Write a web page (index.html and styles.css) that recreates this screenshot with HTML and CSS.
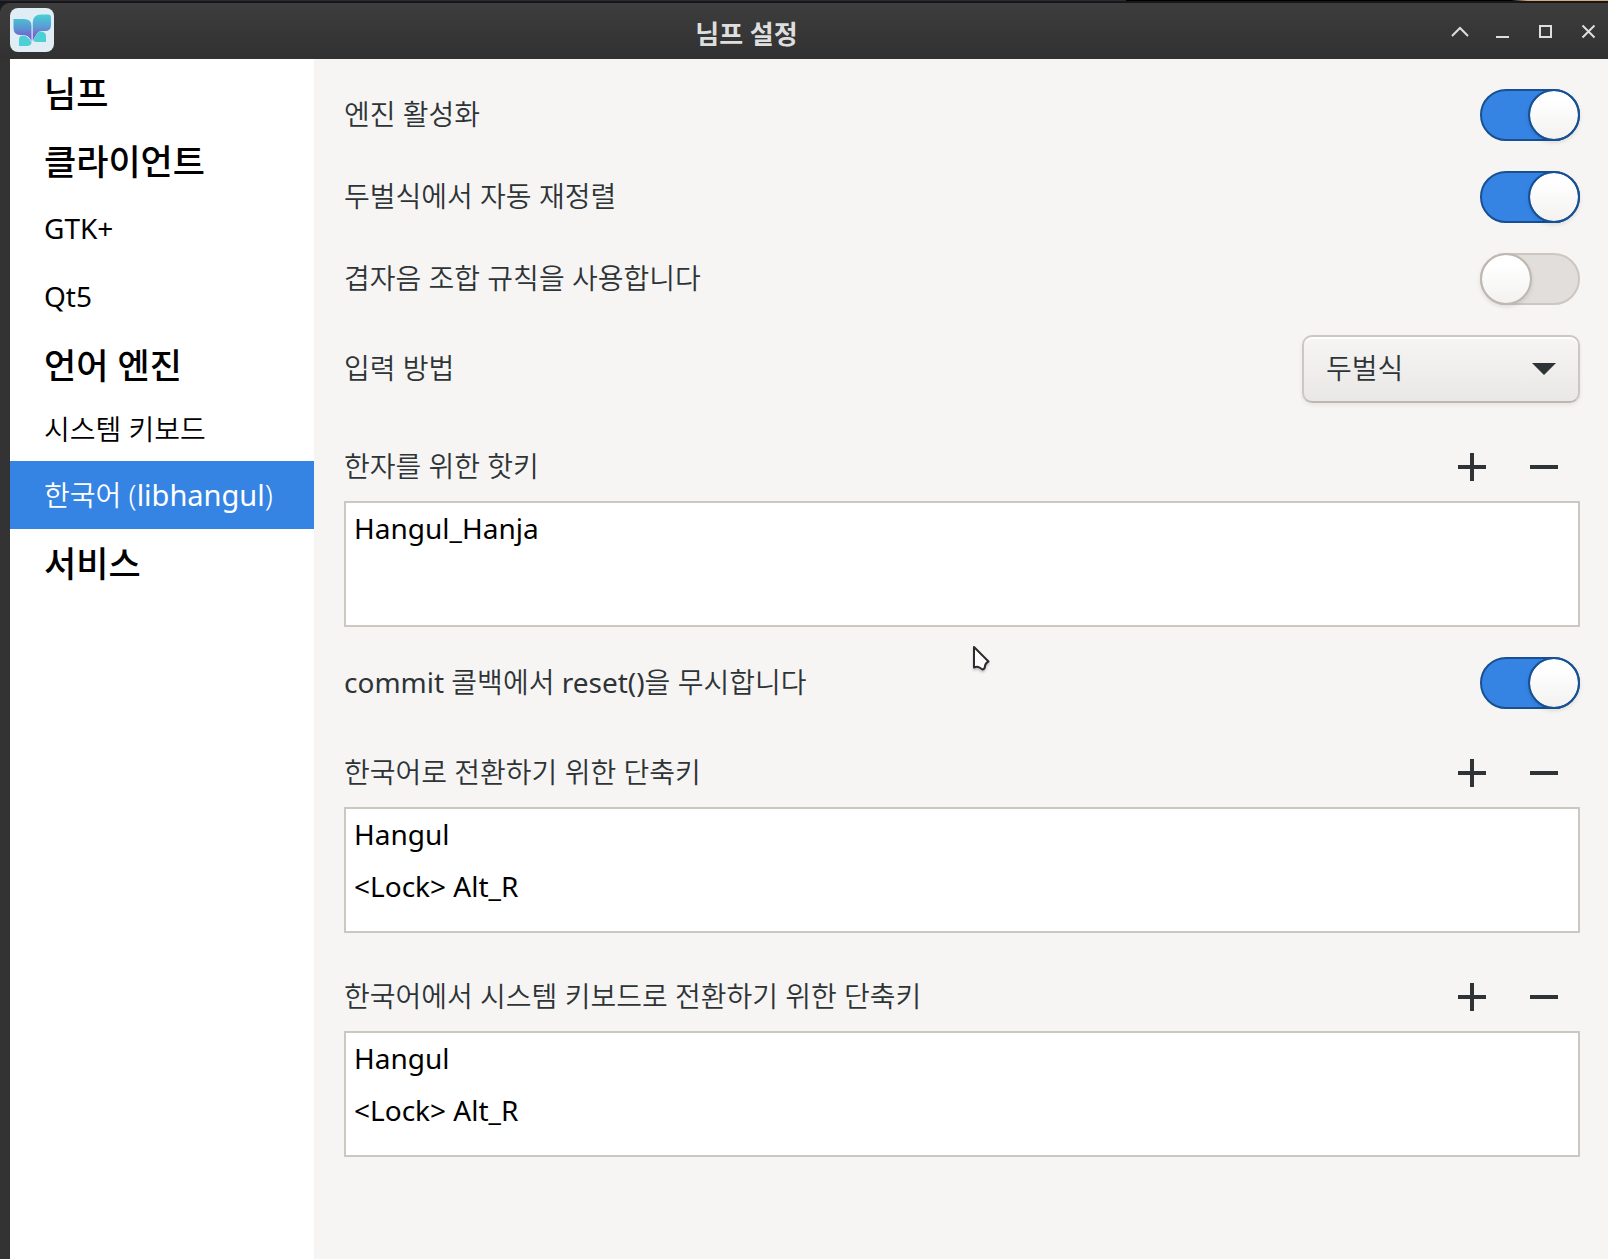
FILE: index.html
```html
<!DOCTYPE html>
<html lang="ko">
<head>
<meta charset="utf-8">
<title>님프 설정</title>
<link rel="stylesheet" href="styles.css">
</head>
<body>
<div class="desktop-edge"></div>
<div class="window">
  <header class="titlebar">
    <svg class="app-icon" viewBox="0 0 44 44" aria-hidden="true">
      <defs>
        <linearGradient id="wing-left" x1="0" y1="0" x2="0" y2="1"><stop offset="0" stop-color="#48bfd2"/><stop offset=".45" stop-color="#5b92d2"/><stop offset="1" stop-color="#8444cc"/></linearGradient>
        <linearGradient id="wing-right" x1="0" y1="0" x2="0" y2="1"><stop offset="0" stop-color="#45d0d4"/><stop offset=".45" stop-color="#5b9ed6"/><stop offset="1" stop-color="#8444cc"/></linearGradient>
      </defs>
      <rect width="44" height="44" rx="8" fill="#e0edf4"/>
      <path d="M21.500 33 Q19 27 13.500 27 H10 Q3.500 27 3.500 20 V11 H14 Q21.500 11 21.500 18 Z" fill="url(#wing-left)"/>
      <path d="M22.700 33 V15 Q22.700 6.500 31 6.500 H38 Q41 6.500 41 9.500 V17 Q41 23 35 23 H31 Q27 23.500 22.700 33 Z" fill="url(#wing-right)"/>
      <path d="M9 38 V31.500 Q9 27.500 13.500 27.500 Q18 28 21.500 34 V35 Q20.500 38 17 38 Z M23.500 32 Q27 23.500 31 23.500 Q36 24 36 28 V34 H26 Q23.500 34 23.500 32 Z" fill="#4ccfd5"/>
    </svg>
    <h1 class="title">님프 설정</h1>
    <div class="window-buttons">
      <button class="window-button" type="button" aria-label="말아 올리기"><svg viewBox="0 0 18 18"><path d="M1 13 L9 5 L17 13"/></svg></button>
      <button class="window-button" type="button" aria-label="최소화"><svg viewBox="0 0 18 18"><path d="M2 14 H15"/></svg></button>
      <button class="window-button" type="button" aria-label="최대화"><svg viewBox="0 0 18 18"><path d="M3 3 H14 V14 H3 Z"/></svg></button>
      <button class="window-button" type="button" aria-label="닫기"><svg viewBox="0 0 18 18"><path d="M2.500 2.500 L14.500 14.500 M14.500 2.500 L2.500 14.500"/></svg></button>
    </div>
  </header>
  <div class="body">
    <nav class="sidebar">
      <a class="nav-item nav-heading" href="#nimf">님프</a>
      <a class="nav-item nav-heading" href="#clients">클라이언트</a>
      <a class="nav-item" href="#gtk">GTK+</a>
      <a class="nav-item" href="#qt5">Qt5</a>
      <a class="nav-item nav-heading" href="#engines">언어 엔진</a>
      <a class="nav-item nav-compact hangul" href="#system-keyboard">시스템 키보드</a>
      <a class="nav-item nav-selected" href="#libhangul" aria-current="page"><span class="hangul">한국어 <span class="engine">(<span class="engine-name">libhangul</span>)</span></span></a>
      <a class="nav-item nav-heading" href="#services">서비스</a>
    </nav>
    <main class="settings">
      <div class="row">
        <label class="row-label hangul" for="enable-engine">엔진 활성화</label>
        <input class="switch" id="enable-engine" type="checkbox" role="switch" checked>
      </div>
      <div class="row">
        <label class="row-label hangul" for="auto-reorder">두벌식에서 자동 재정렬</label>
        <input class="switch" id="auto-reorder" type="checkbox" role="switch" checked>
      </div>
      <div class="row">
        <label class="row-label hangul" for="double-consonant">겹자음 조합 규칙을 사용합니다</label>
        <input class="switch" id="double-consonant" type="checkbox" role="switch">
      </div>
      <div class="row">
        <label class="row-label hangul" for="layout">입력 방법</label>
        <div class="combo">
          <select class="combo-select hangul" id="layout"><option>두벌식</option></select>
          <svg class="combo-arrow" viewBox="0 0 24 12" aria-hidden="true"><path d="M0 0 H24 L12 12 Z"/></svg>
        </div>
      </div>
      <section class="keys">
        <div class="keys-head">
          <h2 class="row-label keys-title hangul" id="hanja-keys">한자를 위한 핫키</h2>
          <button class="tool" type="button" aria-label="추가"><svg viewBox="0 0 28 28"><path d="M0 14 H28 M14 0 V28"/></svg></button>
          <button class="tool" type="button" aria-label="제거"><svg viewBox="0 0 28 28"><path d="M0 14 H28"/></svg></button>
        </div>
        <ul class="key-list" aria-labelledby="hanja-keys"><li>Hangul_Hanja</li></ul>
      </section>
      <div class="row">
        <label class="row-label" for="ignore-reset">commit <span class="hangul">콜백에서</span> reset()<span class="hangul">을 무시합니다</span></label>
        <input class="switch" id="ignore-reset" type="checkbox" role="switch" checked>
      </div>
      <section class="keys">
        <div class="keys-head">
          <h2 class="row-label keys-title hangul" id="to-korean">한국어로 전환하기 위한 단축키</h2>
          <button class="tool" type="button" aria-label="추가"><svg viewBox="0 0 28 28"><path d="M0 14 H28 M14 0 V28"/></svg></button>
          <button class="tool" type="button" aria-label="제거"><svg viewBox="0 0 28 28"><path d="M0 14 H28"/></svg></button>
        </div>
        <ul class="key-list" aria-labelledby="to-korean"><li>Hangul</li><li>&lt;Lock&gt; Alt_R</li></ul>
      </section>
      <section class="keys">
        <div class="keys-head">
          <h2 class="row-label keys-title hangul" id="to-system">한국어에서 시스템 키보드로 전환하기 위한 단축키</h2>
          <button class="tool" type="button" aria-label="추가"><svg viewBox="0 0 28 28"><path d="M0 14 H28 M14 0 V28"/></svg></button>
          <button class="tool" type="button" aria-label="제거"><svg viewBox="0 0 28 28"><path d="M0 14 H28"/></svg></button>
        </div>
        <ul class="key-list" aria-labelledby="to-system"><li>Hangul</li><li>&lt;Lock&gt; Alt_R</li></ul>
      </section>
    </main>
  </div>
</div>
<svg class="pointer" viewBox="0 0 20 28" aria-hidden="true"><path d="M2 2 V22.500 Q5 21 7.500 22.500 L10.500 24.500 Q13 24 13 21 Q13.500 18 16.500 16.500 Z"/></svg>
</body>
</html>
```
FILE: styles.css
```css
*, *::before { box-sizing: border-box; }

body {
  margin: 0;
  min-height: 100vh;
  display: flex;
  flex-direction: column;
  background: #1b1c20;
  color: #2e3436;
  font-family: "Noto Sans", "Noto Sans CJK KR", sans-serif;
  font-size: 28px;
  line-height: 40px;
}

h1, h2, ul { margin: 0; padding: 0; font-size: inherit; font-weight: inherit; list-style: none; }
button { border: 0; padding: 0; background: none; }

.hangul { font-weight: 350; }

.desktop-edge {
  height: 3px;
  border-bottom: 2px solid #17171a;
  background: linear-gradient(90deg, #2b2b36 0 70%, #000 70% 94%, #d8a878 95%);
}

.window {
  flex: 1;
  display: flex;
  flex-direction: column;
  background: #333;
  border-top-left-radius: 10px;
  overflow: hidden;
}

.titlebar {
  height: 56px;
  padding: 0 10px 2px;
  display: flex;
  align-items: center;
  background: linear-gradient(#3d3d3d, #313131);
  color: #dedede;
}
.app-icon { width: 44px; height: 44px; }
.title { flex: 1; text-align: center; font-size: 26px; font-weight: 700; padding-top: 8px; }
.window-buttons { display: flex; gap: 25px; padding: 4px 0 0 12px; }
.window-button { width: 18px; height: 18px; }
.window-button svg { display: block; fill: none; stroke: #dedede; stroke-width: 2; }

.body { flex: 1; display: flex; padding-left: 10px; }

.sidebar { width: 304px; flex: none; background: #fff; }
.nav-item {
  height: 68px;
  padding: 0 0 2px 34px;
  display: flex;
  align-items: center;
  color: #000;
  text-decoration: none;
  white-space: nowrap;
}
.nav-heading { font-size: 35px; font-weight: 500; padding: 2px 0 0 34px; }
.nav-compact { height: 62px; }
.nav-selected { padding-bottom: 0; background: #3584e4; color: #fff; }
.engine { font-size: 29px; }
.engine-name { font-weight: 400; }

.settings {
  flex: 1;
  padding: 30px 28px 30px 30px;
  display: flex;
  flex-direction: column;
  gap: 30px;
  background: #f6f5f4;
}
.row { display: flex; align-items: center; justify-content: space-between; }
.row-label { padding-bottom: 2px; }

.switch {
  appearance: none;
  width: 100px;
  height: 52px;
  margin: 0;
  display: flex;
  border: 2px solid #cdc7c2;
  border-radius: 26px;
  background: #e1dedb;
}
.switch::before {
  content: "";
  width: 52px;
  height: 52px;
  margin: -2px;
  border: 2px solid #bfb8b1;
  border-radius: 50%;
  background: linear-gradient(#fff 20%, #f3f2f1) padding-box;
  box-shadow: 0 2px 4px #0000001a;
}
.switch:checked { justify-content: flex-end; border-color: #185091; background: #3584e4; }
.switch:checked::before { border-color: #185091; }

.combo { position: relative; width: 278px; }
.combo-select {
  appearance: none;
  display: block;
  width: 100%;
  height: 68px;
  padding: 0 22px 2px;
  border: 2px solid #cdc7c2;
  border-bottom-color: #bfb8b1;
  border-radius: 10px;
  background: linear-gradient(#f6f5f4, #eae8e6);
  box-shadow: inset 0 2px #fff, 0 2px 4px #00000012;
  color: inherit;
  font-family: inherit;
  font-size: inherit;
}
.combo-arrow {
  position: absolute;
  right: 24px;
  top: 28px;
  width: 24px;
  height: 12px;
  fill: #2e3436;
  pointer-events: none;
}

.keys-head { display: flex; align-items: center; height: 68px; }
.keys-title { flex: 1; }
.tool { width: 72px; height: 68px; display: grid; place-items: center; }
.tool svg { width: 28px; height: 28px; stroke: #2e3436; stroke-width: 4; }

.key-list { min-height: 126px; padding: 0 8px; border: 2px solid #cdc7c2; background: #fff; color: #000; }
.key-list li { height: 52px; line-height: 50px; }

.pointer {
  position: absolute;
  left: 972px;
  top: 645px;
  width: 20px;
  height: 28px;
  fill: #fff;
  stroke: #2c2c30;
  stroke-width: 2;
  stroke-linejoin: round;
  filter: drop-shadow(0 2px 1px #00000033);
}
```
